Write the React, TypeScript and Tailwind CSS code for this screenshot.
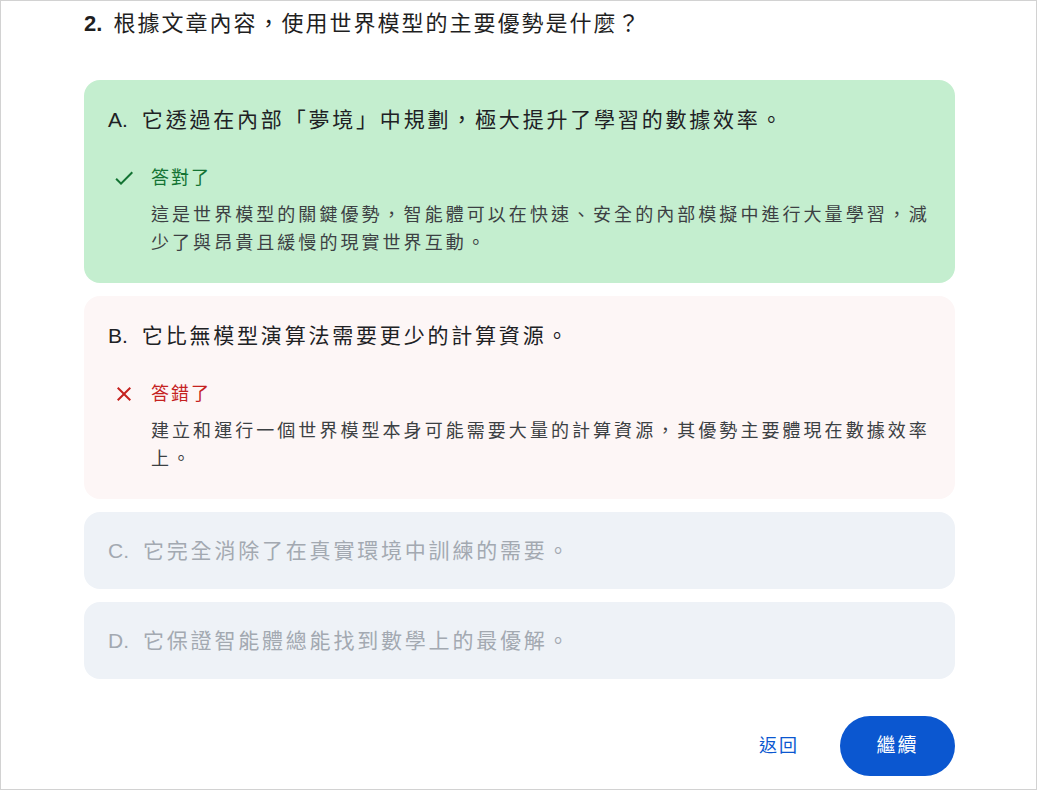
const FONT = "font-['Liberation_Sans','Noto_Sans_CJK_TC',sans-serif]";

type Option = {
  key: string;
  text: string;
  state: 'correct' | 'wrong' | 'idle';
  lines?: string[];
};

const OPTIONS: Option[] = [
  {
    key: 'A',
    text: '它透過在內部「夢境」中規劃，極大提升了學習的數據效率。',
    state: 'correct',
    lines: ['這是世界模型的關鍵優勢，智能體可以在快速、安全的內部模擬中進行大量學習，減', '少了與昂貴且緩慢的現實世界互動。'],
  },
  {
    key: 'B',
    text: '它比無模型演算法需要更少的計算資源。',
    state: 'wrong',
    lines: ['建立和運行一個世界模型本身可能需要大量的計算資源，其優勢主要體現在數據效率', '上。'],
  },
  { key: 'C', text: '它完全消除了在真實環境中訓練的需要。', state: 'idle' },
  { key: 'D', text: '它保證智能體總能找到數學上的最優解。', state: 'idle' },
];

function CheckIcon() {
  return (
    <svg width="24" height="24" viewBox="0 0 24 24" fill="#137333">
      <path d="M9 16.17L4.83 12l-1.42 1.41L9 19 21 7l-1.41-1.41z" />
    </svg>
  );
}

function CloseIcon() {
  return (
    <svg width="24" height="24" viewBox="0 0 24 24" fill="#c5221f">
      <path d="M19 6.41L17.59 5 12 10.59 6.41 5 5 6.41 10.59 12 5 17.59 6.41 19 12 13.41 17.59 19 19 17.59 13.41 12z" />
    </svg>
  );
}

function OptionCard({ option }: { option: Option }) {
  if (option.state === 'idle') {
    return (
      <div className="flex h-[77px] items-center rounded-[16px] bg-[#eef2f7] px-[24px]">
        <p className="text-[21px] leading-[32px] tracking-[2.8px] text-[#a3a9b1]">
          <span className="mr-[14px] tracking-normal">{option.key}.</span>
          {option.text}
        </p>
      </div>
    );
  }

  const correct = option.state === 'correct';

  return (
    <div className={`rounded-[16px] px-[24px] pt-[24px] pb-[26px] ${correct ? 'bg-[#c4eecf]' : 'bg-[#fdf6f6]'}`}>
      <p className="text-[21px] leading-[32px] tracking-[2.8px] text-[#202124]">
        <span className="mr-[14px] tracking-normal">{option.key}.</span>
        {option.text}
      </p>
      <div className="mt-[30px] flex">
        <div className="w-[43px] shrink-0 pl-[4px]">{correct ? <CheckIcon /> : <CloseIcon />}</div>
        <div>
          <p className={`text-[18px] leading-[24px] tracking-[2px] ${correct ? 'text-[#137333]' : 'text-[#c5221f]'}`}>
            {correct ? '答對了' : '答錯了'}
          </p>
          <p className="mt-[11px] text-[18px] leading-[28px] tracking-[3.05px] text-[#3c4043] whitespace-nowrap">
            {option.lines?.map((line, i) => (
              <span key={i} className="block">
                {line}
              </span>
            ))}
          </p>
        </div>
      </div>
    </div>
  );
}

export default function App() {
  return (
    <div className={`h-[790px] w-[1037px] border border-[#d2d2d2] bg-white ${FONT}`}>
      <div className="ml-[83px] w-[871px] pt-[9px]">
        <h2 className="text-[22px] leading-[28px] tracking-[2px] text-[#1f1f1f]">
          <span className="mr-[3px] font-bold tracking-normal">2.</span> 根據文章內容，使用世界模型的主要優勢是什麼？
        </h2>

        <div className="mt-[42px] flex flex-col gap-[13px]">
          {OPTIONS.map((option) => (
            <OptionCard key={option.key} option={option} />
          ))}
        </div>

        <div className="mt-[37px] flex items-center justify-end gap-[41px]">
          <button type="button" className="text-[18px] tracking-[2px] text-[#0b57d0]">
            返回
          </button>
          <button
            type="button"
            className="flex h-[60px] w-[115px] items-center justify-center rounded-full bg-[#0b57d0] text-[19px] tracking-[2px] text-white"
          >
            繼續
          </button>
        </div>
      </div>
    </div>
  );
}
